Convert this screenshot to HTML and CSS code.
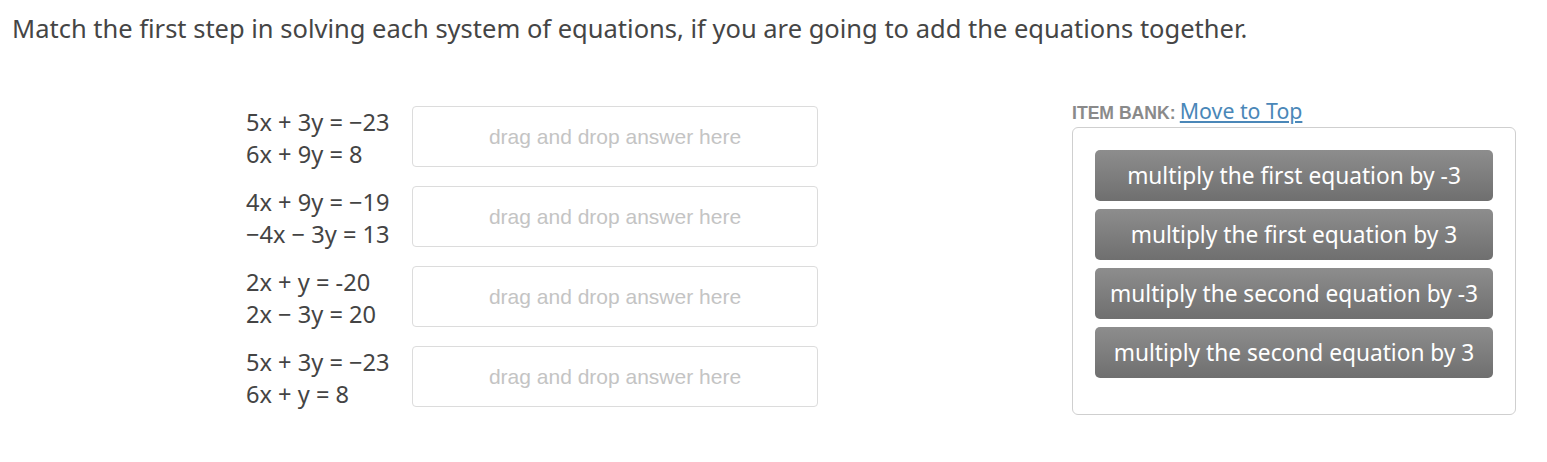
FILE: index.html
```html
<!DOCTYPE html>
<html>
<head>
<meta charset="utf-8">
<link rel="stylesheet" href="styles.css">
</head>
<body>
<h1 class="title">Match the first step in solving each system of equations, if you are going to add the equations together.</h1>
<div class="main">
  <div class="pairs">
    <div class="pair">
      <div class="eqs"><div>5x + 3y = −23</div><div>6x + 9y = 8</div></div>
      <div class="drop">drag and drop answer here</div>
    </div>
    <div class="pair">
      <div class="eqs"><div>4x + 9y = −19</div><div>−4x − 3y = 13</div></div>
      <div class="drop">drag and drop answer here</div>
    </div>
    <div class="pair">
      <div class="eqs"><div>2x + y = -20</div><div>2x − 3y = 20</div></div>
      <div class="drop">drag and drop answer here</div>
    </div>
    <div class="pair">
      <div class="eqs"><div>5x + 3y = −23</div><div>6x + y = 8</div></div>
      <div class="drop">drag and drop answer here</div>
    </div>
  </div>
  <div class="bank">
    <div class="bank-head"><span class="bank-label">ITEM BANK:</span> <a class="bank-link" href="#">Move to Top</a></div>
    <div class="bank-box">
      <div class="item">multiply the first equation by -3</div>
      <div class="item">multiply the first equation by 3</div>
      <div class="item">multiply the second equation by -3</div>
      <div class="item">multiply the second equation by 3</div>
    </div>
  </div>
</div>
</body>
</html>
```
FILE: styles.css
```css
body {
  margin: 0;
  background: #fff;
  font-family: "Noto Sans", "Open Sans", sans-serif;
  color: #444;
}
.title {
  margin: 0;
  padding: 12px 0 0 12px;
  font-size: 25.5px;
  font-weight: normal;
  line-height: 32px;
  color: #454545;
}
.main {
  display: flex;
  margin-top: 62px;
}
.pairs {
  margin-left: 246px;
  display: flex;
  flex-direction: column;
  gap: 16px;
}
.pair {
  display: flex;
  align-items: flex-start;
}
.eqs {
  width: 166px;
  font-size: 23.6px;
  line-height: 32px;
  color: #444;
  white-space: nowrap;
}
.drop {
  width: 404px;
  height: 59px;
  border: 1px solid #dcdcdc;
  border-radius: 4px;
  display: flex;
  align-items: center;
  justify-content: center;
  font-family: "Liberation Sans", Arial, sans-serif;
  font-size: 21px;
  color: #c4c4c4;
}
.bank {
  margin-left: 254px;
  margin-top: -6px;
}
.bank-head {
  height: 27px;
  line-height: 22px;
  white-space: nowrap;
}
.bank-label {
  font-family: "Liberation Sans", Arial, sans-serif;
  font-weight: bold;
  font-size: 17.6px;
  color: #8a8a8a;
}
.bank-link {
  font-size: 21.3px;
  color: #4a87b8;
}
.bank-box {
  width: 398px;
  border: 1px solid #cfcfcf;
  border-radius: 6px;
  padding: 22px 22px 36px;
  display: flex;
  flex-direction: column;
  gap: 8px;
}
.item {
  height: 51px;
  border-radius: 5px;
  background: linear-gradient(#8d8d8d, #6f6f6f);
  color: #fff;
  font-size: 22.7px;
  display: flex;
  align-items: center;
  justify-content: center;
}
```
